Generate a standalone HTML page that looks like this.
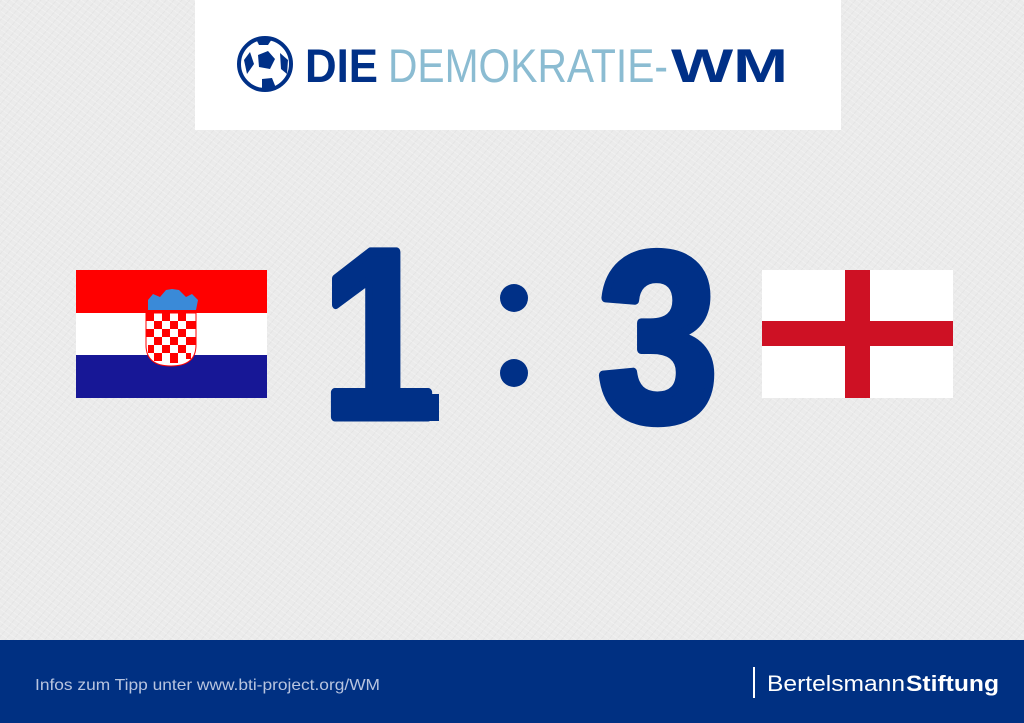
<!DOCTYPE html>
<html><head><meta charset="utf-8">
<style>
html,body{margin:0;padding:0}
body{width:1024px;height:723px;position:relative;overflow:hidden;background:#ebebeb;font-family:"Liberation Sans",sans-serif}
.tex{position:absolute;left:0;top:0;width:1024px;height:640px;background:
repeating-linear-gradient(35deg,rgba(255,255,255,.25) 0 1px,transparent 1px 5px),
repeating-linear-gradient(-50deg,rgba(200,200,200,.18) 0 1px,transparent 1px 6px),#ebebeb}
.abs{position:absolute}
</style></head><body>
<div class="tex"></div>
<div class="abs" style="left:195px;top:0;width:646px;height:130px;background:#fff"></div>
<svg class="abs" style="left:0;top:0" width="1024" height="723">
  <!-- ball -->
  <circle cx="265" cy="64" r="26" fill="#fff" stroke="#003087" stroke-width="4"/>
  <polygon points="258,55 268,51 275,59 270,69 259,67" fill="#003087"/>
  <polygon points="244,60 250,52 254,64 247,74" fill="#003087"/>
  <polygon points="280,53 288,60 287,74 281,69" fill="#003087"/>
  <polygon points="262,79 272,78 276,88 262,89" fill="#003087"/>
  <polygon points="256,39 272,39 268,45 259,45" fill="#003087"/>
  <text x="305" y="82" font-family="Liberation Sans" font-weight="bold" font-size="47" fill="#003087" textLength="73" lengthAdjust="spacingAndGlyphs">DIE</text>
  <text x="388" y="82" font-family="Liberation Sans" font-size="47" fill="#8bbcd2" textLength="280" lengthAdjust="spacingAndGlyphs" style="font-weight:300">DEMOKRATIE-</text>
  <text x="671" y="82" font-family="Liberation Sans" font-weight="bold" font-size="47" fill="#003087" textLength="117" lengthAdjust="spacingAndGlyphs">WM</text>

  <!-- croatia -->
  <rect x="76" y="270" width="191" height="43" fill="#ff0000"/>
  <rect x="76" y="313" width="191" height="42" fill="#fff"/>
  <rect x="76" y="355" width="191" height="43" fill="#171796"/>
  <path d="M148 310 L148 300 L153 294 L160 297 L166 290 L172 289 L179 290 L186 297 L192 294 L198 300 L196 310 Z" fill="#3a8ad8"/>
  <path d="M146 313 L196 313 L196 345 Q196 366 171 366 Q146 366 146 345 Z" fill="#fff" stroke="#ff0000" stroke-width="1"/>
  <g fill="#ff0000">
    <rect x="146" y="313" width="8" height="8"/><rect x="162" y="313" width="8" height="8"/><rect x="178" y="313" width="8" height="8"/>
    <rect x="154" y="321" width="8" height="8"/><rect x="170" y="321" width="8" height="8"/><rect x="186" y="321" width="10" height="8"/>
    <rect x="146" y="329" width="8" height="8"/><rect x="162" y="329" width="8" height="8"/><rect x="178" y="329" width="8" height="8"/>
    <rect x="154" y="337" width="8" height="8"/><rect x="170" y="337" width="8" height="8"/><rect x="186" y="337" width="10" height="8"/>
    <rect x="148" y="345" width="6" height="8"/><rect x="162" y="345" width="8" height="8"/><rect x="178" y="345" width="8" height="8"/>
    <rect x="154" y="353" width="8" height="8"/><rect x="170" y="353" width="8" height="10"/><rect x="186" y="353" width="5" height="6"/>
  </g>

  <!-- england -->
  <rect x="762" y="270" width="191" height="128" fill="#fff"/>
  <rect x="845" y="270" width="25" height="128" fill="#ce1124"/>
  <rect x="762" y="321" width="191" height="25" fill="#ce1124"/>

  <!-- score -->
  <text x="322" y="417" font-family="Liberation Sans" font-weight="bold" font-size="240" fill="#003087" stroke="#003087" stroke-width="9" stroke-linejoin="round" textLength="112" lengthAdjust="spacingAndGlyphs">1</text>
  <rect x="335" y="394" width="104" height="27" fill="#003087"/>
  <circle cx="514" cy="298" r="14" fill="#003087"/>
  <circle cx="514" cy="373" r="14" fill="#003087"/>
  <text x="598" y="420" font-family="Liberation Sans" font-weight="bold" font-size="240" fill="#003087" stroke="#003087" stroke-width="9" stroke-linejoin="round" textLength="120" lengthAdjust="spacingAndGlyphs">3</text>

  <!-- footer -->
  <rect x="0" y="640" width="1024" height="83" fill="#003082"/>
  <text x="35" y="690" font-family="Liberation Sans" font-size="16" fill="#b8c4df" textLength="345" lengthAdjust="spacingAndGlyphs">Infos zum Tipp unter www.bti-project.org/WM</text>
  <rect x="753" y="667" width="2" height="31" fill="#fff"/>
  <text x="767" y="691" font-family="Liberation Sans" font-size="22" fill="#fff" textLength="138" lengthAdjust="spacingAndGlyphs">Bertelsmann</text>
  <text x="906" y="691" font-family="Liberation Sans" font-weight="bold" font-size="22" fill="#fff" textLength="93" lengthAdjust="spacingAndGlyphs">Stiftung</text>
</svg>
</body></html>
